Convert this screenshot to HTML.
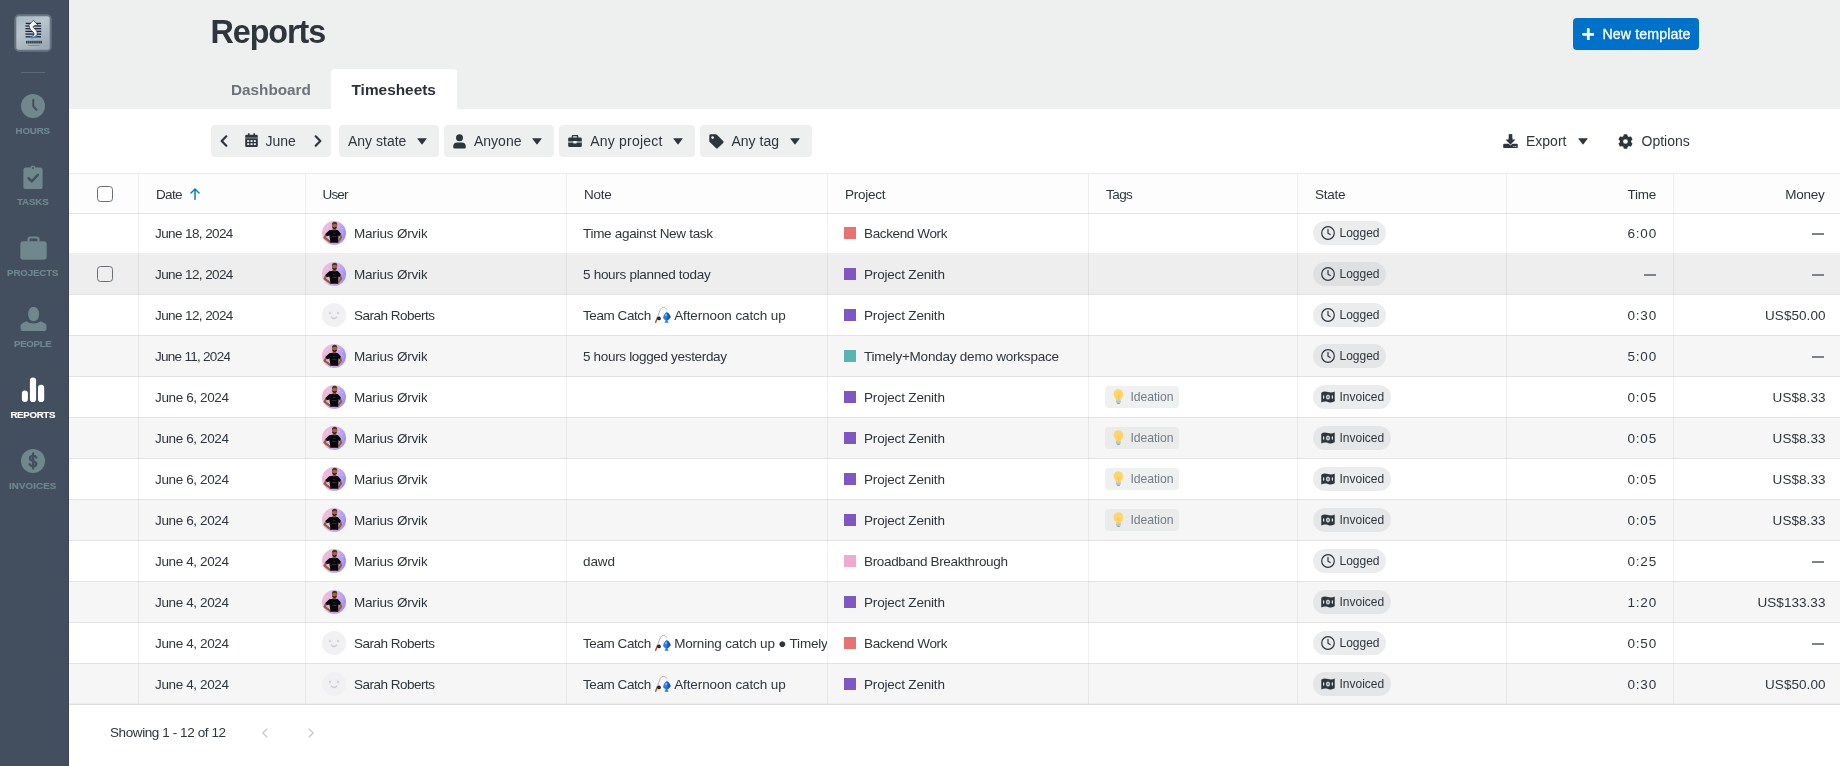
<!DOCTYPE html>
<html><head><meta charset="utf-8"><title>Reports</title>
<style>
*{box-sizing:border-box}
html,body{margin:0;padding:0}
body{width:1840px;height:766px;overflow:hidden;position:relative;background:#fff;
 font-family:"Liberation Sans",sans-serif;color:#2f353d;font-size:13px}
#root{position:absolute;left:0;top:0;width:1840px;height:766px;will-change:transform}
.abs{position:absolute}
svg{display:block;position:absolute}
/* sidebar */
#sb{position:absolute;left:0;top:0;width:69px;height:766px;background:#434f5e;box-shadow:inset -1px 0 0 #3a4654}
.lbl{position:absolute;left:0;width:65.400px;text-align:center;font-weight:bold;font-size:9.700px;line-height:10px;color:#6f878d;letter-spacing:-0.100px;padding-left:0.100px;-webkit-text-stroke:0.150px currentColor}
.lbl.on{color:#fff}
/* header */
#hd{position:absolute;left:69px;top:0;width:1771px;height:109px;background:#eef0f0}
#title{position:absolute;left:210.500px;top:13px;font-size:32.300px;letter-spacing:-1.050px;line-height:38px;font-weight:bold;color:#2f353d;white-space:nowrap}
#newbtn{position:absolute;left:1573px;top:18px;width:126px;height:32px;border-radius:4px;background:#0071c8}
#newbtn span{position:absolute;left:29.500px;top:0;line-height:32px;font-size:14.200px;letter-spacing:0.100px;color:#fff;white-space:nowrap;-webkit-text-stroke:0.300px #fff}
.tab{position:absolute;top:69px;height:40px;line-height:41px;font-weight:bold;white-space:nowrap}
#tab1{left:231px;color:#6d7379;font-size:15.3px}
#tab2{left:331px;width:126px;background:#fff;border-radius:4px 4px 0 0;color:#2b3038;font-size:15.4px;padding-left:20.5px}
/* filters */
.fb{position:absolute;top:125px;height:32px;border-radius:4px;background:#eef0f0}
.ft{position:absolute;top:125px;height:32px;line-height:32px;font-size:14px;color:#2f353d;white-space:nowrap}
/* table */
.hl{position:absolute;left:69px;width:1771px;height:1px;background:rgba(0,0,0,0.105)}
.vl{position:absolute;top:174px;width:1px;height:530px;background:rgba(0,0,0,0.06)}
.rowbg{position:absolute;left:69px;width:1771px;height:40px}
.th{position:absolute;top:175px;height:39px;line-height:40px;font-size:13.500px;letter-spacing:-0.250px;color:#2f353d;white-space:nowrap}
.td{position:absolute;height:40px;line-height:40px;font-size:13.500px;letter-spacing:-0.250px;color:#2f353d;white-space:nowrap;overflow:hidden}
.r{text-align:right}
.cb{position:absolute;width:16px;height:16px;border:1.400px solid #696e74;border-radius:3.500px}
.sq{position:absolute;width:12px;height:12px}
.badge{position:absolute;height:24px;border-radius:12px;background:rgba(195,198,203,0.33)}
.badge span{position:absolute;left:26.500px;top:0;line-height:24px;font-size:12px;color:#2f353d}
.tag{position:absolute;width:74px;height:22px;border-radius:4px;background:rgba(216,221,221,0.420)}
.tag span{position:absolute;left:25.500px;top:0;line-height:22px;font-size:12.200px;letter-spacing:-0.050px;color:#727c87}
.dash{color:#7b8288}

.cd{letter-spacing:-0.500px}
.cu{letter-spacing:-0.420px}
.cn{letter-spacing:-0.320px}
.cp{letter-spacing:-0.280px}
.ct{letter-spacing:0.800px}
.cm{letter-spacing:0.050px}
</style></head>
<body>
<div id="root">
<div id="sb">
<svg style="left:14px;top:14px" width="38" height="38" viewBox="0 0 38 38">
<defs><linearGradient id="lg" x1="0" y1="0" x2="0.600" y2="1"><stop offset="0" stop-color="#a7b6c2"/><stop offset="0.450" stop-color="#b9c5ce"/><stop offset="1" stop-color="#9dabb8"/></linearGradient></defs>
<rect x="1.300" y="1.300" width="35.400" height="35.400" rx="3.600" fill="url(#lg)" stroke="#69747f" stroke-width="2"/>
<g stroke="#1a2536" stroke-width="1.300">
<line x1="11.600" y1="9.400" x2="27" y2="9.400"/><line x1="11.400" y1="12" x2="27.200" y2="12"/><line x1="11.400" y1="14.700" x2="27.200" y2="14.700"/><line x1="11.400" y1="17.400" x2="27.200" y2="17.400"/><line x1="11.400" y1="20.100" x2="27.200" y2="20.100"/><line x1="11.600" y1="22.800" x2="27" y2="22.800"/>
</g>
<path d="M19.400 6.400 L24.200 11.200 L21.200 11.400 C18.800 11.800 18.600 13.400 20.600 14.800 C23.400 16.800 24 19.600 22.400 21.800 C21 23.600 17.600 24 15.600 22.600 C18.600 22.800 20.400 21.400 20 19.400 C19.600 17.400 15.800 16.600 15.600 13.600 C15.500 11.600 14.800 11.200 14.600 11.200Z" fill="#f6f9fb" stroke="#1a2536" stroke-width="0.700" stroke-linejoin="round"/>
<path d="M15.600 22.800 C17.800 24.400 21.400 23.800 22.800 21.200" stroke="#2a90dd" stroke-width="1.500" fill="none"/>
<g opacity="0.850"><rect x="12.00" y="26.700" width="1.550" height="2.900" rx="0.400" fill="#18212e"/><rect x="14.05" y="26.700" width="1.550" height="2.900" rx="0.400" fill="#18212e"/><rect x="16.10" y="26.700" width="1.550" height="2.900" rx="0.400" fill="#18212e"/><rect x="18.15" y="26.700" width="1.550" height="2.900" rx="0.400" fill="#18212e"/><rect x="20.20" y="26.700" width="1.550" height="2.900" rx="0.400" fill="#18212e"/><rect x="22.25" y="26.700" width="1.550" height="2.900" rx="0.400" fill="#18212e"/><rect x="24.30" y="26.700" width="1.550" height="2.900" rx="0.400" fill="#18212e"/><rect x="26.35" y="26.700" width="1.550" height="2.900" rx="0.400" fill="#18212e"/></g>
<rect x="14" y="31.300" width="11.500" height="0.500" fill="#5a6571"/>
</svg>
<div class="abs" style="left:21px;top:72px;width:24px;height:1px;background:#5d6977"></div>
<svg style="left:21px;top:94px" width="24" height="24" viewBox="0 0 24 24"><circle cx="12" cy="12" r="12" fill="#6f878d"/><path d="M12.300 5.800 V12.400 L15.600 15.800" fill="none" stroke="#434f5e" stroke-width="2" stroke-linecap="round" stroke-linejoin="round"/></svg>
<div class="lbl" style="top:126px">HOURS</div>
<svg style="left:23px;top:165px" width="20" height="24" viewBox="0 0 20 24"><path d="M7.300 2.600 A2.800 2.800 0 0 1 12.700 2.600 H17 A2.600 2.600 0 0 1 19.600 5.200 V21.400 A2.600 2.600 0 0 1 17 24 H3 A2.600 2.600 0 0 1 0.400 21.400 V5.200 A2.600 2.600 0 0 1 3 2.600 Z" fill="#6f878d"/><circle cx="10" cy="3" r="1" fill="#434f5e"/><path d="M5.600 13.200 L8.800 16.400 L14.800 10" fill="none" stroke="#434f5e" stroke-width="2.400" stroke-linecap="round" stroke-linejoin="round"/></svg>
<div class="lbl" style="top:197px">TASKS</div>
<svg style="left:19.500px;top:236px" width="27" height="24" viewBox="0 0 27 24"><path d="M8.500 5.500 V3.500 A2 2 0 0 1 10.500 1.500 H16.500 A2 2 0 0 1 18.500 3.500 V5.500" fill="none" stroke="#6f878d" stroke-width="2.200"/><rect x="0.300" y="5.300" width="26.400" height="18.500" rx="3" fill="#6f878d"/></svg>
<div class="lbl" style="top:268px">PROJECTS</div>
<svg style="left:19.500px;top:307px" width="27" height="25" viewBox="0 0 27 25"><rect x="8.200" y="-0.100" width="10.800" height="14.400" rx="5.400" ry="6.200" fill="#6f878d"/><path d="M6.300 14.200 A14 14 0 0 0 20.800 14.200 L25 16.600 Q26.500 17.500 26.500 19.200 V22 A2 2 0 0 1 24.500 24 H2.600 A2 2 0 0 1 0.600 22 V19.200 Q0.600 17.500 2.100 16.600Z" fill="#6f878d"/></svg>
<div class="lbl" style="top:339px;letter-spacing:-0.300px">PEOPLE</div>
<svg style="left:21px;top:377px" width="24" height="26" viewBox="0 0 24 26"><rect x="0.900" y="13.600" width="6" height="11.400" rx="3" fill="#fff"/><rect x="8.900" y="0.600" width="6.200" height="24.400" rx="3.100" fill="#fff"/><rect x="17" y="7.800" width="6.200" height="17.200" rx="3.100" fill="#fff"/></svg>
<div class="lbl on" style="top:410px;letter-spacing:-0.300px">REPORTS</div>
<svg style="left:21px;top:449px" width="24" height="24" viewBox="0 0 24 24"><circle cx="12" cy="12" r="12" fill="#6f878d"/><path d="M15.300 8.600 C14.800 7.400 13.600 6.900 12.200 6.900 C10.400 6.900 9 7.800 9 9.400 C9 11 10.300 11.500 12.100 12 C14 12.500 15.300 13.100 15.300 14.700 C15.300 16.300 13.900 17.200 12.100 17.200 C10.500 17.200 9.200 16.500 8.700 15.200 M12.100 4.500 V19.600" fill="none" stroke="#434f5e" stroke-width="2.300" stroke-linecap="round"/></svg>
<div class="lbl" style="top:481px;letter-spacing:0.150px">INVOICES</div>
</div>
<div id="hd"></div>
<div id="title">Reports</div>
<div id="newbtn"><svg style="left:8.800px;top:9.800px" width="12.600" height="12.600" viewBox="0 0 12.600 12.600"><path d="M6.300 1.400 V11.200 M1.400 6.300 H11.200" stroke="#fff" stroke-width="2.800" stroke-linecap="round"/></svg><span>New template</span></div>
<div class="tab" id="tab1">Dashboard</div>
<div class="tab" id="tab2">Timesheets</div>
<div class="fb" style="left:211px;width:120px"></div>
<svg style="left:220px;top:135px" width="8" height="12" viewBox="0 0 8 12"><path d="M6.300 1.300 L1.700 6 L6.300 10.700" fill="none" stroke="#2f353d" stroke-width="2.200" stroke-linecap="round" stroke-linejoin="round"/></svg>
<svg style="left:314px;top:135px" width="8" height="12" viewBox="0 0 8 12"><path d="M1.700 1.300 L6.300 6 L1.700 10.700" fill="none" stroke="#2f353d" stroke-width="2.200" stroke-linecap="round" stroke-linejoin="round"/></svg>
<svg style="left:245px;top:133.200px" width="13" height="14.600" viewBox="0 0 13 15" preserveAspectRatio="none"><path d="M3 0.300 H4.600 V1.800 H8.400 V0.300 H10 V1.800 H11.400 A1.400 1.400 0 0 1 12.800 3.200 V4.800 H0.200 V3.200 A1.400 1.400 0 0 1 1.600 1.800 H3Z M0.200 5.500 H12.800 V13 A1.400 1.400 0 0 1 11.400 14.400 H1.600 A1.400 1.400 0 0 1 0.200 13Z" fill="#2f353d"/>
<g fill="#eef0f0"><rect x="2.200" y="7.300" width="2" height="1.900"/><rect x="5.500" y="7.300" width="2" height="1.900"/><rect x="8.800" y="7.300" width="2" height="1.900"/><rect x="2.200" y="10.500" width="2" height="1.900"/><rect x="5.500" y="10.500" width="2" height="1.900"/><rect x="8.800" y="10.500" width="2" height="1.900"/></g></svg>
<div class="ft" style="left:265.500px">June</div>
<div class="fb" style="left:339px;width:100px"></div>
<div class="ft" style="left:348px">Any state</div>
<svg style="left:417px;top:138px" width="10" height="7" viewBox="0 0 10 7"><path d="M0.600 0.300 H9.400 Q10 0.300 9.600 0.800 L5.400 6.200 Q5 6.700 4.600 6.200 L0.400 0.800 Q0 0.300 0.600 0.300Z" fill="#2f353d"/></svg>
<div class="fb" style="left:444px;width:110px"></div>
<svg style="left:453px;top:133.500px" width="13" height="15" viewBox="0 0 13 15"><circle cx="6.500" cy="3.700" r="3.500" fill="#2f353d"/><path d="M4.300 8.400 H8.700 A4.100 4.100 0 0 1 12.800 12.500 V13.200 A1.300 1.300 0 0 1 11.500 14.500 H1.500 A1.300 1.300 0 0 1 0.200 13.200 V12.500 A4.100 4.100 0 0 1 4.300 8.400Z" fill="#2f353d"/></svg>
<div class="ft" style="left:474px">Anyone</div>
<svg style="left:532px;top:138px" width="10" height="7" viewBox="0 0 10 7"><path d="M0.600 0.300 H9.400 Q10 0.300 9.600 0.800 L5.400 6.200 Q5 6.700 4.600 6.200 L0.400 0.800 Q0 0.300 0.600 0.300Z" fill="#2f353d"/></svg>
<div class="fb" style="left:559px;width:136px"></div>
<svg style="left:568.200px;top:134.600px" width="14" height="12.200" viewBox="0 0 15 13" preserveAspectRatio="none"><path d="M4.700 2.800 V1.600 A1.100 1.100 0 0 1 5.800 0.500 H9.200 A1.100 1.100 0 0 1 10.300 1.600 V2.800" fill="none" stroke="#2f353d" stroke-width="1.500"/><path d="M1.600 2.700 H13.400 A1.400 1.400 0 0 1 14.800 4.100 V7 H9.300 V6.300 H5.700 V7 H0.200 V4.100 A1.400 1.400 0 0 1 1.600 2.700Z M0.200 7.900 H5.700 V8.600 A0.500 0.500 0 0 0 6.200 9.100 H8.800 A0.500 0.500 0 0 0 9.300 8.600 V7.900 H14.800 V11.400 A1.400 1.400 0 0 1 13.400 12.800 H1.600 A1.400 1.400 0 0 1 0.200 11.400Z" fill="#2f353d"/></svg>
<div class="ft" style="left:590.300px;letter-spacing:0.200px">Any project</div>
<svg style="left:673px;top:138px" width="10" height="7" viewBox="0 0 10 7"><path d="M0.600 0.300 H9.400 Q10 0.300 9.600 0.800 L5.400 6.200 Q5 6.700 4.600 6.200 L0.400 0.800 Q0 0.300 0.600 0.300Z" fill="#2f353d"/></svg>
<div class="fb" style="left:700px;width:112px"></div>
<svg style="left:709px;top:133.500px" width="15" height="15" viewBox="0 0 15 15"><path d="M0.300 1.700 A1.400 1.400 0 0 1 1.700 0.300 H6.900 A1.400 1.400 0 0 1 7.900 0.700 L14.100 6.900 A1.400 1.400 0 0 1 14.100 8.900 L8.900 14.100 A1.400 1.400 0 0 1 6.900 14.100 L0.700 7.900 A1.400 1.400 0 0 1 0.300 6.900Z" fill="#2f353d"/><circle cx="3.600" cy="3.600" r="1.300" fill="#eef0f0"/></svg>
<div class="ft" style="left:731.500px">Any tag</div>
<svg style="left:790px;top:138px" width="10" height="7" viewBox="0 0 10 7"><path d="M0.600 0.300 H9.400 Q10 0.300 9.600 0.800 L5.400 6.200 Q5 6.700 4.600 6.200 L0.400 0.800 Q0 0.300 0.600 0.300Z" fill="#2f353d"/></svg>
<svg style="left:1503px;top:133.500px" width="15" height="14.400" viewBox="0 0 15 14.4"><path d="M1.300 9.700 H13.700 A1.100 1.100 0 0 1 14.800 10.800 V13.100 A1.100 1.100 0 0 1 13.700 14.200 H1.300 A1.100 1.100 0 0 1 0.200 13.100 V10.800 A1.100 1.100 0 0 1 1.300 9.700Z" fill="#2f353d"/><path d="M5.900 0.200 H9.100 V5.700 H12 L7.500 10.500 L3 5.700 H5.900Z" fill="#2f353d" stroke="#fff" stroke-width="1.500" stroke-linejoin="round"/><path d="M5.900 0.200 H9.100 V5.700 H12 L7.500 10.500 L3 5.700 H5.900Z" fill="#2f353d" stroke="#2f353d" stroke-width="0.400" stroke-linejoin="round"/><rect x="4" y="0" width="7" height="4" fill="#fff"/><path d="M5.900 0.200 H9.100 V5.700 H5.900Z" fill="#2f353d" stroke="#2f353d" stroke-width="0.400" stroke-linejoin="round"/><circle cx="10.900" cy="12.500" r="0.600" fill="#fff"/><circle cx="12.800" cy="12.500" r="0.600" fill="#fff"/></svg>
<div class="ft" style="left:1526px">Export</div>
<svg style="left:1578px;top:138px" width="10" height="7" viewBox="0 0 10 7"><path d="M0.600 0.300 H9.400 Q10 0.300 9.600 0.800 L5.400 6.200 Q5 6.700 4.600 6.200 L0.400 0.800 Q0 0.300 0.600 0.300Z" fill="#2f353d"/></svg>
<svg style="left:1618px;top:133.800px" width="15" height="15" viewBox="0 0 15 15"><path d="M6.31 0.91 L8.69 0.91 L9.08 2.65 L10.91 3.71 L12.62 3.18 L13.80 5.23 L12.49 6.44 L12.49 8.56 L13.80 9.77 L12.62 11.82 L10.91 11.29 L9.08 12.35 L8.69 14.09 L6.31 14.09 L5.92 12.35 L4.09 11.29 L2.38 11.82 L1.20 9.77 L2.51 8.56 L2.51 6.44 L1.20 5.23 L2.38 3.18 L4.09 3.71 L5.92 2.65Z" fill="#2f353d" stroke="#2f353d" stroke-width="1.300" stroke-linejoin="round"/><circle cx="7.500" cy="7.500" r="2.350" fill="#fff"/></svg>
<div class="ft" style="left:1641.500px">Options</div>
<div class="abs" style="left:69px;top:174px;width:1771px;height:39px;background:#fdfdfd"></div>
<div class="rowbg" style="top:253px;height:41px;background:#eeeeee"></div>
<div class="rowbg" style="top:336px;height:40px;background:#f6f6f6"></div>
<div class="rowbg" style="top:418px;height:40px;background:#f6f6f6"></div>
<div class="rowbg" style="top:500px;height:40px;background:#f6f6f6"></div>
<div class="rowbg" style="top:582px;height:40px;background:#f6f6f6"></div>
<div class="rowbg" style="top:664px;height:40px;background:#f6f6f6"></div>
<div class="hl" style="top:173px;background:rgba(0,0,0,0.075)"></div>
<div class="hl" style="top:213px"></div>
<div class="hl" style="top:294px"></div>
<div class="hl" style="top:335px"></div>
<div class="hl" style="top:376px"></div>
<div class="hl" style="top:417px"></div>
<div class="hl" style="top:458px"></div>
<div class="hl" style="top:499px"></div>
<div class="hl" style="top:540px"></div>
<div class="hl" style="top:581px"></div>
<div class="hl" style="top:622px"></div>
<div class="hl" style="top:663px"></div>
<div class="hl" style="top:703px;background:rgba(0,0,0,0.035)"></div>
<div class="hl" style="top:704px;background:#dcdee0"></div>
<div class="vl" style="left:138px"></div>
<div class="vl" style="left:305px"></div>
<div class="vl" style="left:566px"></div>
<div class="vl" style="left:827px"></div>
<div class="vl" style="left:1088px"></div>
<div class="vl" style="left:1297px"></div>
<div class="vl" style="left:1506px"></div>
<div class="vl" style="left:1673px"></div>
<div class="cb" style="left:97px;top:186px"></div>
<div class="th" style="left:156px;letter-spacing:-0.650px">Date</div>
<svg style="left:190px;top:188px" width="10" height="12" viewBox="0 0 10 12"><path d="M5 11.300 V1.200 M1 5 L5 1 L9 5" fill="none" stroke="#0f78d0" stroke-width="1.500" stroke-linecap="round" stroke-linejoin="round"/></svg>
<div class="th" style="left:322.500px;letter-spacing:-0.850px">User</div>
<div class="th" style="left:584px">Note</div>
<div class="th" style="left:845px">Project</div>
<div class="th" style="left:1106px;letter-spacing:-0.550px">Tags</div>
<div class="th" style="left:1315px">State</div>
<div class="th r" style="left:1507px;width:149px">Time</div>
<div class="th r" style="left:1674px;width:150.500px">Money</div>
<div class="td cd" style="left:155px;top:214px;letter-spacing:-0.6px">June 18, 2024</div>
<svg style="left:322px;top:221px" width="24" height="24" viewBox="0 0 24 24">
<defs><linearGradient id="ag0" x1="0" y1="0.300" x2="1" y2="0.650"><stop offset="0" stop-color="#f6bcd4"/><stop offset="0.450" stop-color="#dab6ec"/><stop offset="1" stop-color="#9a8df2"/></linearGradient><clipPath id="ac0"><circle cx="12" cy="12" r="12"/></clipPath></defs>
<g clip-path="url(#ac0)"><rect width="24" height="24" fill="url(#ag0)"/>
<g fill="#fff" opacity="0.550"><circle cx="5.500" cy="6" r="0.500"/><circle cx="3" cy="9" r="0.450"/><circle cx="8" cy="3.500" r="0.450"/><circle cx="17" cy="5.500" r="0.500"/><circle cx="20.300" cy="7.500" r="0.500"/><circle cx="20" cy="12" r="0.450"/><circle cx="16.500" cy="2.800" r="0.400"/></g>
<path d="M4.300 13.600 L2.500 16.700 L8.600 21.100" fill="none" stroke="#96593b" stroke-width="2.100" stroke-linecap="round" stroke-linejoin="round"/>
<path d="M18 13.500 L19.100 16.700 L15.900 21" fill="none" stroke="#96593b" stroke-width="2" stroke-linecap="round" stroke-linejoin="round"/>
<path d="M3.300 12.900 L7.300 9.300 Q9.500 8.600 11.300 8.700 L13.800 8.700 Q15.300 8.800 16 9.200 L18.800 12.500 L17.900 14.900 L16.600 14.200 L16 21.700 L8.500 21.700 L7.400 14.600 L5.100 15.300Z" fill="#09090b"/>
<rect x="10.700" y="6" width="3.400" height="3.300" fill="#83513a"/>
<ellipse cx="12.600" cy="4.500" rx="2.650" ry="3.500" fill="#9c6646"/>
<path d="M9.950 3.900 C9.900 1.500 11.100 0.700 12.700 0.700 C14.300 0.700 15.400 1.600 15.250 3.700 C14.400 2.600 11.100 2.600 9.950 3.900Z" fill="#523322"/>
<path d="M10.100 5.600 C10.500 8.600 14.600 8.800 15.150 5.500 C14.400 6.600 11.100 6.700 10.100 5.600Z" fill="#2f1c14"/>
<rect x="10" y="15" width="4.600" height="0.800" fill="#34353a"/><rect x="10.900" y="12" width="2.400" height="0.600" fill="#26403e"/>
</g></svg>
<div class="td cu" style="left:354px;top:214px;letter-spacing:-0.19px">Marius Ørvik</div>
<div class="td cn" style="left:583px;top:214px;width:244px;letter-spacing:-0.3px">Time against New task</div>
<div class="sq" style="left:844px;top:227px;background:#e57373"></div>
<div class="td cp" style="left:864px;top:214px;letter-spacing:-0.37px">Backend Work</div>
<div class="badge" style="left:1313px;top:221px;width:73px"><svg style="left:7.500px;top:5px" width="14" height="14" viewBox="0 0 14 14"><circle cx="7" cy="7" r="6.300" fill="none" stroke="#2f353d" stroke-width="1.200"/><path d="M7 3.300 V7.200 L9.200 8.500" fill="none" stroke="#2f353d" stroke-width="1.200" stroke-linecap="round" stroke-linejoin="round"/></svg><span>Logged</span></div>
<div class="td r ct" style="left:1507px;width:150px;top:214px">6:00</div>
<div class="abs" style="left:1812px;top:233.3px;width:12px;height:1.500px;background:#7b8288"></div>
<div class="cb" style="left:97px;top:266px"></div>
<div class="td cd" style="left:155px;top:255px;letter-spacing:-0.6px">June 12, 2024</div>
<svg style="left:322px;top:262px" width="24" height="24" viewBox="0 0 24 24">
<defs><linearGradient id="ag1" x1="0" y1="0.300" x2="1" y2="0.650"><stop offset="0" stop-color="#f6bcd4"/><stop offset="0.450" stop-color="#dab6ec"/><stop offset="1" stop-color="#9a8df2"/></linearGradient><clipPath id="ac1"><circle cx="12" cy="12" r="12"/></clipPath></defs>
<g clip-path="url(#ac1)"><rect width="24" height="24" fill="url(#ag1)"/>
<g fill="#fff" opacity="0.550"><circle cx="5.500" cy="6" r="0.500"/><circle cx="3" cy="9" r="0.450"/><circle cx="8" cy="3.500" r="0.450"/><circle cx="17" cy="5.500" r="0.500"/><circle cx="20.300" cy="7.500" r="0.500"/><circle cx="20" cy="12" r="0.450"/><circle cx="16.500" cy="2.800" r="0.400"/></g>
<path d="M4.300 13.600 L2.500 16.700 L8.600 21.100" fill="none" stroke="#96593b" stroke-width="2.100" stroke-linecap="round" stroke-linejoin="round"/>
<path d="M18 13.500 L19.100 16.700 L15.900 21" fill="none" stroke="#96593b" stroke-width="2" stroke-linecap="round" stroke-linejoin="round"/>
<path d="M3.300 12.900 L7.300 9.300 Q9.500 8.600 11.300 8.700 L13.800 8.700 Q15.300 8.800 16 9.200 L18.800 12.500 L17.900 14.900 L16.600 14.200 L16 21.700 L8.500 21.700 L7.400 14.600 L5.100 15.300Z" fill="#09090b"/>
<rect x="10.700" y="6" width="3.400" height="3.300" fill="#83513a"/>
<ellipse cx="12.600" cy="4.500" rx="2.650" ry="3.500" fill="#9c6646"/>
<path d="M9.950 3.900 C9.900 1.500 11.100 0.700 12.700 0.700 C14.300 0.700 15.400 1.600 15.250 3.700 C14.400 2.600 11.100 2.600 9.950 3.900Z" fill="#523322"/>
<path d="M10.100 5.600 C10.500 8.600 14.600 8.800 15.150 5.500 C14.400 6.600 11.100 6.700 10.100 5.600Z" fill="#2f1c14"/>
<rect x="10" y="15" width="4.600" height="0.800" fill="#34353a"/><rect x="10.900" y="12" width="2.400" height="0.600" fill="#26403e"/>
</g></svg>
<div class="td cu" style="left:354px;top:255px;letter-spacing:-0.19px">Marius Ørvik</div>
<div class="td cn" style="left:583px;top:255px;width:244px;letter-spacing:-0.295px">5 hours planned today</div>
<div class="sq" style="left:844px;top:268px;background:#7e57c2"></div>
<div class="td cp" style="left:864px;top:255px;letter-spacing:-0.18px">Project Zenith</div>
<div class="badge" style="left:1313px;top:262px;width:73px"><svg style="left:7.500px;top:5px" width="14" height="14" viewBox="0 0 14 14"><circle cx="7" cy="7" r="6.300" fill="none" stroke="#2f353d" stroke-width="1.200"/><path d="M7 3.300 V7.200 L9.200 8.500" fill="none" stroke="#2f353d" stroke-width="1.200" stroke-linecap="round" stroke-linejoin="round"/></svg><span>Logged</span></div>
<div class="abs" style="left:1644px;top:274.3px;width:12px;height:1.500px;background:#7b8288"></div>
<div class="abs" style="left:1812px;top:274.3px;width:12px;height:1.500px;background:#7b8288"></div>
<div class="td cd" style="left:155px;top:296px;letter-spacing:-0.6px">June 12, 2024</div>
<svg style="left:322px;top:303px" width="24" height="24" viewBox="0 0 24 24"><circle cx="12" cy="12" r="12" fill="#f1f1f3"/><circle cx="8" cy="10" r="1.200" fill="#d2d2d5"/><circle cx="16" cy="10" r="1.200" fill="#d2d2d5"/><path d="M9.500 14.200 Q12 16.900 14.500 14.200" fill="none" stroke="#d0d0d3" stroke-width="1.600" stroke-linecap="round"/></svg>
<div class="td cu" style="left:354px;top:296px;letter-spacing:-0.5px">Sarah Roberts</div>
<div class="td cn" style="left:583px;top:296px;letter-spacing:-0.43px">Team Catch</div>
<svg style="left:655px;top:307px" width="16" height="16" viewBox="0 0 16 16"><path d="M2.100 11 L5.400 2.300 Q6.600 0.300 8.500 0.300 Q10.600 0.400 11.500 2.200" fill="none" stroke="#aaa297" stroke-width="0.800" stroke-linecap="round"/><path d="M11.500 2.200 V5.400" stroke="#d9dadc" stroke-width="0.400"/><path d="M0.700 15.300 L2.300 10.900" stroke="#a4532f" stroke-width="1.400" stroke-linecap="round"/><circle cx="4" cy="11.400" r="1.850" fill="#1d1e22"/><circle cx="4.100" cy="11.500" r="0.600" fill="#3d5a78"/><path d="M11.500 5.300 C13.800 6 15.700 8.800 15.600 10.300 C14.600 11.600 13.100 13 12.300 13.600 L13.700 15.800 L9.600 15.800 L10.700 13.600 C9.500 12.600 8.600 11.600 8.100 10.900 C8.600 8.400 9.600 6 11.500 5.300Z" fill="#2a79dd"/><path d="M11.500 5.300 C13.800 6 15.700 8.800 15.600 10.300 C14.600 11.600 13.100 13 12.300 13.600 C12.600 10.500 12.400 7.500 11.500 5.300Z" fill="#1b55bf"/><ellipse cx="11" cy="8" rx="1.300" ry="1.600" fill="#56b4ee"/><path d="M8.100 10.900 L9.300 10 L9.300 11.600Z" fill="#5f6df0"/></svg>
<div class="td cn" style="left:674.200px;width:152.800px;top:296px;letter-spacing:-0.11px">Afternoon catch up</div>
<div class="sq" style="left:844px;top:309px;background:#7e57c2"></div>
<div class="td cp" style="left:864px;top:296px;letter-spacing:-0.18px">Project Zenith</div>
<div class="badge" style="left:1313px;top:303px;width:73px"><svg style="left:7.500px;top:5px" width="14" height="14" viewBox="0 0 14 14"><circle cx="7" cy="7" r="6.300" fill="none" stroke="#2f353d" stroke-width="1.200"/><path d="M7 3.300 V7.200 L9.200 8.500" fill="none" stroke="#2f353d" stroke-width="1.200" stroke-linecap="round" stroke-linejoin="round"/></svg><span>Logged</span></div>
<div class="td r ct" style="left:1507px;width:150px;top:296px">0:30</div>
<div class="td r cm" style="left:1674px;width:151.500px;top:296px">US$50.00</div>
<div class="td cd" style="left:155px;top:337px;letter-spacing:-0.72px">June 11, 2024</div>
<svg style="left:322px;top:344px" width="24" height="24" viewBox="0 0 24 24">
<defs><linearGradient id="ag3" x1="0" y1="0.300" x2="1" y2="0.650"><stop offset="0" stop-color="#f6bcd4"/><stop offset="0.450" stop-color="#dab6ec"/><stop offset="1" stop-color="#9a8df2"/></linearGradient><clipPath id="ac3"><circle cx="12" cy="12" r="12"/></clipPath></defs>
<g clip-path="url(#ac3)"><rect width="24" height="24" fill="url(#ag3)"/>
<g fill="#fff" opacity="0.550"><circle cx="5.500" cy="6" r="0.500"/><circle cx="3" cy="9" r="0.450"/><circle cx="8" cy="3.500" r="0.450"/><circle cx="17" cy="5.500" r="0.500"/><circle cx="20.300" cy="7.500" r="0.500"/><circle cx="20" cy="12" r="0.450"/><circle cx="16.500" cy="2.800" r="0.400"/></g>
<path d="M4.300 13.600 L2.500 16.700 L8.600 21.100" fill="none" stroke="#96593b" stroke-width="2.100" stroke-linecap="round" stroke-linejoin="round"/>
<path d="M18 13.500 L19.100 16.700 L15.900 21" fill="none" stroke="#96593b" stroke-width="2" stroke-linecap="round" stroke-linejoin="round"/>
<path d="M3.300 12.900 L7.300 9.300 Q9.500 8.600 11.300 8.700 L13.800 8.700 Q15.300 8.800 16 9.200 L18.800 12.500 L17.900 14.900 L16.600 14.200 L16 21.700 L8.500 21.700 L7.400 14.600 L5.100 15.300Z" fill="#09090b"/>
<rect x="10.700" y="6" width="3.400" height="3.300" fill="#83513a"/>
<ellipse cx="12.600" cy="4.500" rx="2.650" ry="3.500" fill="#9c6646"/>
<path d="M9.950 3.900 C9.900 1.500 11.100 0.700 12.700 0.700 C14.300 0.700 15.400 1.600 15.250 3.700 C14.400 2.600 11.100 2.600 9.950 3.900Z" fill="#523322"/>
<path d="M10.100 5.600 C10.500 8.600 14.600 8.800 15.150 5.500 C14.400 6.600 11.100 6.700 10.100 5.600Z" fill="#2f1c14"/>
<rect x="10" y="15" width="4.600" height="0.800" fill="#34353a"/><rect x="10.900" y="12" width="2.400" height="0.600" fill="#26403e"/>
</g></svg>
<div class="td cu" style="left:354px;top:337px;letter-spacing:-0.19px">Marius Ørvik</div>
<div class="td cn" style="left:583px;top:337px;width:244px;letter-spacing:-0.33px">5 hours logged yesterday</div>
<div class="sq" style="left:844px;top:350px;background:#58b5b0"></div>
<div class="td cp" style="left:864px;top:337px;letter-spacing:-0.22px">Timely+Monday demo workspace</div>
<div class="badge" style="left:1313px;top:344px;width:73px"><svg style="left:7.500px;top:5px" width="14" height="14" viewBox="0 0 14 14"><circle cx="7" cy="7" r="6.300" fill="none" stroke="#2f353d" stroke-width="1.200"/><path d="M7 3.300 V7.200 L9.200 8.500" fill="none" stroke="#2f353d" stroke-width="1.200" stroke-linecap="round" stroke-linejoin="round"/></svg><span>Logged</span></div>
<div class="td r ct" style="left:1507px;width:150px;top:337px">5:00</div>
<div class="abs" style="left:1812px;top:356.3px;width:12px;height:1.500px;background:#7b8288"></div>
<div class="td cd" style="left:155px;top:378px;letter-spacing:-0.37px">June 6, 2024</div>
<svg style="left:322px;top:385px" width="24" height="24" viewBox="0 0 24 24">
<defs><linearGradient id="ag4" x1="0" y1="0.300" x2="1" y2="0.650"><stop offset="0" stop-color="#f6bcd4"/><stop offset="0.450" stop-color="#dab6ec"/><stop offset="1" stop-color="#9a8df2"/></linearGradient><clipPath id="ac4"><circle cx="12" cy="12" r="12"/></clipPath></defs>
<g clip-path="url(#ac4)"><rect width="24" height="24" fill="url(#ag4)"/>
<g fill="#fff" opacity="0.550"><circle cx="5.500" cy="6" r="0.500"/><circle cx="3" cy="9" r="0.450"/><circle cx="8" cy="3.500" r="0.450"/><circle cx="17" cy="5.500" r="0.500"/><circle cx="20.300" cy="7.500" r="0.500"/><circle cx="20" cy="12" r="0.450"/><circle cx="16.500" cy="2.800" r="0.400"/></g>
<path d="M4.300 13.600 L2.500 16.700 L8.600 21.100" fill="none" stroke="#96593b" stroke-width="2.100" stroke-linecap="round" stroke-linejoin="round"/>
<path d="M18 13.500 L19.100 16.700 L15.900 21" fill="none" stroke="#96593b" stroke-width="2" stroke-linecap="round" stroke-linejoin="round"/>
<path d="M3.300 12.900 L7.300 9.300 Q9.500 8.600 11.300 8.700 L13.800 8.700 Q15.300 8.800 16 9.200 L18.800 12.500 L17.900 14.900 L16.600 14.200 L16 21.700 L8.500 21.700 L7.400 14.600 L5.100 15.300Z" fill="#09090b"/>
<rect x="10.700" y="6" width="3.400" height="3.300" fill="#83513a"/>
<ellipse cx="12.600" cy="4.500" rx="2.650" ry="3.500" fill="#9c6646"/>
<path d="M9.950 3.900 C9.900 1.500 11.100 0.700 12.700 0.700 C14.300 0.700 15.400 1.600 15.250 3.700 C14.400 2.600 11.100 2.600 9.950 3.900Z" fill="#523322"/>
<path d="M10.100 5.600 C10.500 8.600 14.600 8.800 15.150 5.500 C14.400 6.600 11.100 6.700 10.100 5.600Z" fill="#2f1c14"/>
<rect x="10" y="15" width="4.600" height="0.800" fill="#34353a"/><rect x="10.900" y="12" width="2.400" height="0.600" fill="#26403e"/>
</g></svg>
<div class="td cu" style="left:354px;top:378px;letter-spacing:-0.19px">Marius Ørvik</div>
<div class="sq" style="left:844px;top:391px;background:#7e57c2"></div>
<div class="td cp" style="left:864px;top:378px;letter-spacing:-0.18px">Project Zenith</div>
<div class="tag" style="left:1105px;top:386px"><svg style="left:7.600px;top:3.200px" width="10.800" height="15.200" viewBox="0 0 12 16" preserveAspectRatio="none"><path d="M6 0.300 C9.200 0.300 11.400 2.600 11.400 5.400 C11.400 7.400 10.200 8.600 9.400 9.800 C9 10.400 8.800 11 8.800 11.800 H3.200 C3.200 11 3 10.400 2.600 9.800 C1.800 8.600 0.600 7.400 0.600 5.400 C0.600 2.600 2.800 0.300 6 0.300Z" fill="#ffd56b"/><path d="M4.600 6 L6 8 L7.400 6 M6 8 V11.500" fill="none" stroke="#f3c150" stroke-width="0.700"/><rect x="3.300" y="11.800" width="5.400" height="2.600" rx="0.500" fill="#b8c4cc"/><rect x="4.200" y="14.400" width="3.600" height="1.300" rx="0.600" fill="#98a6b0"/></svg><span>Ideation</span></div>
<div class="badge" style="left:1313px;top:385px;width:78px"><svg style="left:7.700px;top:6px" width="14" height="12" viewBox="0 0 15 12" preserveAspectRatio="none"><path d="M0.300 1.700 C2.500 0.300 4.800 0.300 7.500 1.100 C10.200 1.900 12.500 1.700 14.700 0.500 V10.300 C12.500 11.700 10.200 11.700 7.500 10.900 C4.800 10.100 2.500 10.300 0.300 11.500Z" fill="#2f353d"/><ellipse cx="7.500" cy="6" rx="2.100" ry="2.500" fill="#e8e9ea"/><rect x="2.200" y="4.300" width="1.300" height="3.400" rx="0.600" fill="#e8e9ea"/><rect x="11.500" y="4.300" width="1.300" height="3.400" rx="0.600" fill="#e8e9ea"/><rect x="7" y="4.700" width="1" height="2.600" fill="#2f353d"/></svg><span>Invoiced</span></div>
<div class="td r ct" style="left:1507px;width:150px;top:378px">0:05</div>
<div class="td r cm" style="left:1674px;width:151.500px;top:378px">US$8.33</div>
<div class="td cd" style="left:155px;top:419px;letter-spacing:-0.37px">June 6, 2024</div>
<svg style="left:322px;top:426px" width="24" height="24" viewBox="0 0 24 24">
<defs><linearGradient id="ag5" x1="0" y1="0.300" x2="1" y2="0.650"><stop offset="0" stop-color="#f6bcd4"/><stop offset="0.450" stop-color="#dab6ec"/><stop offset="1" stop-color="#9a8df2"/></linearGradient><clipPath id="ac5"><circle cx="12" cy="12" r="12"/></clipPath></defs>
<g clip-path="url(#ac5)"><rect width="24" height="24" fill="url(#ag5)"/>
<g fill="#fff" opacity="0.550"><circle cx="5.500" cy="6" r="0.500"/><circle cx="3" cy="9" r="0.450"/><circle cx="8" cy="3.500" r="0.450"/><circle cx="17" cy="5.500" r="0.500"/><circle cx="20.300" cy="7.500" r="0.500"/><circle cx="20" cy="12" r="0.450"/><circle cx="16.500" cy="2.800" r="0.400"/></g>
<path d="M4.300 13.600 L2.500 16.700 L8.600 21.100" fill="none" stroke="#96593b" stroke-width="2.100" stroke-linecap="round" stroke-linejoin="round"/>
<path d="M18 13.500 L19.100 16.700 L15.900 21" fill="none" stroke="#96593b" stroke-width="2" stroke-linecap="round" stroke-linejoin="round"/>
<path d="M3.300 12.900 L7.300 9.300 Q9.500 8.600 11.300 8.700 L13.800 8.700 Q15.300 8.800 16 9.200 L18.800 12.500 L17.900 14.900 L16.600 14.200 L16 21.700 L8.500 21.700 L7.400 14.600 L5.100 15.300Z" fill="#09090b"/>
<rect x="10.700" y="6" width="3.400" height="3.300" fill="#83513a"/>
<ellipse cx="12.600" cy="4.500" rx="2.650" ry="3.500" fill="#9c6646"/>
<path d="M9.950 3.900 C9.900 1.500 11.100 0.700 12.700 0.700 C14.300 0.700 15.400 1.600 15.250 3.700 C14.400 2.600 11.100 2.600 9.950 3.900Z" fill="#523322"/>
<path d="M10.100 5.600 C10.500 8.600 14.600 8.800 15.150 5.500 C14.400 6.600 11.100 6.700 10.100 5.600Z" fill="#2f1c14"/>
<rect x="10" y="15" width="4.600" height="0.800" fill="#34353a"/><rect x="10.900" y="12" width="2.400" height="0.600" fill="#26403e"/>
</g></svg>
<div class="td cu" style="left:354px;top:419px;letter-spacing:-0.19px">Marius Ørvik</div>
<div class="sq" style="left:844px;top:432px;background:#7e57c2"></div>
<div class="td cp" style="left:864px;top:419px;letter-spacing:-0.18px">Project Zenith</div>
<div class="tag" style="left:1105px;top:427px"><svg style="left:7.600px;top:3.200px" width="10.800" height="15.200" viewBox="0 0 12 16" preserveAspectRatio="none"><path d="M6 0.300 C9.200 0.300 11.400 2.600 11.400 5.400 C11.400 7.400 10.200 8.600 9.400 9.800 C9 10.400 8.800 11 8.800 11.800 H3.200 C3.200 11 3 10.400 2.600 9.800 C1.800 8.600 0.600 7.400 0.600 5.400 C0.600 2.600 2.800 0.300 6 0.300Z" fill="#ffd56b"/><path d="M4.600 6 L6 8 L7.400 6 M6 8 V11.500" fill="none" stroke="#f3c150" stroke-width="0.700"/><rect x="3.300" y="11.800" width="5.400" height="2.600" rx="0.500" fill="#b8c4cc"/><rect x="4.200" y="14.400" width="3.600" height="1.300" rx="0.600" fill="#98a6b0"/></svg><span>Ideation</span></div>
<div class="badge" style="left:1313px;top:426px;width:78px"><svg style="left:7.700px;top:6px" width="14" height="12" viewBox="0 0 15 12" preserveAspectRatio="none"><path d="M0.300 1.700 C2.500 0.300 4.800 0.300 7.500 1.100 C10.200 1.900 12.500 1.700 14.700 0.500 V10.300 C12.500 11.700 10.200 11.700 7.500 10.900 C4.800 10.100 2.500 10.300 0.300 11.500Z" fill="#2f353d"/><ellipse cx="7.500" cy="6" rx="2.100" ry="2.500" fill="#e8e9ea"/><rect x="2.200" y="4.300" width="1.300" height="3.400" rx="0.600" fill="#e8e9ea"/><rect x="11.500" y="4.300" width="1.300" height="3.400" rx="0.600" fill="#e8e9ea"/><rect x="7" y="4.700" width="1" height="2.600" fill="#2f353d"/></svg><span>Invoiced</span></div>
<div class="td r ct" style="left:1507px;width:150px;top:419px">0:05</div>
<div class="td r cm" style="left:1674px;width:151.500px;top:419px">US$8.33</div>
<div class="td cd" style="left:155px;top:460px;letter-spacing:-0.37px">June 6, 2024</div>
<svg style="left:322px;top:467px" width="24" height="24" viewBox="0 0 24 24">
<defs><linearGradient id="ag6" x1="0" y1="0.300" x2="1" y2="0.650"><stop offset="0" stop-color="#f6bcd4"/><stop offset="0.450" stop-color="#dab6ec"/><stop offset="1" stop-color="#9a8df2"/></linearGradient><clipPath id="ac6"><circle cx="12" cy="12" r="12"/></clipPath></defs>
<g clip-path="url(#ac6)"><rect width="24" height="24" fill="url(#ag6)"/>
<g fill="#fff" opacity="0.550"><circle cx="5.500" cy="6" r="0.500"/><circle cx="3" cy="9" r="0.450"/><circle cx="8" cy="3.500" r="0.450"/><circle cx="17" cy="5.500" r="0.500"/><circle cx="20.300" cy="7.500" r="0.500"/><circle cx="20" cy="12" r="0.450"/><circle cx="16.500" cy="2.800" r="0.400"/></g>
<path d="M4.300 13.600 L2.500 16.700 L8.600 21.100" fill="none" stroke="#96593b" stroke-width="2.100" stroke-linecap="round" stroke-linejoin="round"/>
<path d="M18 13.500 L19.100 16.700 L15.900 21" fill="none" stroke="#96593b" stroke-width="2" stroke-linecap="round" stroke-linejoin="round"/>
<path d="M3.300 12.900 L7.300 9.300 Q9.500 8.600 11.300 8.700 L13.800 8.700 Q15.300 8.800 16 9.200 L18.800 12.500 L17.900 14.900 L16.600 14.200 L16 21.700 L8.500 21.700 L7.400 14.600 L5.100 15.300Z" fill="#09090b"/>
<rect x="10.700" y="6" width="3.400" height="3.300" fill="#83513a"/>
<ellipse cx="12.600" cy="4.500" rx="2.650" ry="3.500" fill="#9c6646"/>
<path d="M9.950 3.900 C9.900 1.500 11.100 0.700 12.700 0.700 C14.300 0.700 15.400 1.600 15.250 3.700 C14.400 2.600 11.100 2.600 9.950 3.900Z" fill="#523322"/>
<path d="M10.100 5.600 C10.500 8.600 14.600 8.800 15.150 5.500 C14.400 6.600 11.100 6.700 10.100 5.600Z" fill="#2f1c14"/>
<rect x="10" y="15" width="4.600" height="0.800" fill="#34353a"/><rect x="10.900" y="12" width="2.400" height="0.600" fill="#26403e"/>
</g></svg>
<div class="td cu" style="left:354px;top:460px;letter-spacing:-0.19px">Marius Ørvik</div>
<div class="sq" style="left:844px;top:473px;background:#7e57c2"></div>
<div class="td cp" style="left:864px;top:460px;letter-spacing:-0.18px">Project Zenith</div>
<div class="tag" style="left:1105px;top:468px"><svg style="left:7.600px;top:3.200px" width="10.800" height="15.200" viewBox="0 0 12 16" preserveAspectRatio="none"><path d="M6 0.300 C9.200 0.300 11.400 2.600 11.400 5.400 C11.400 7.400 10.200 8.600 9.400 9.800 C9 10.400 8.800 11 8.800 11.800 H3.200 C3.200 11 3 10.400 2.600 9.800 C1.800 8.600 0.600 7.400 0.600 5.400 C0.600 2.600 2.800 0.300 6 0.300Z" fill="#ffd56b"/><path d="M4.600 6 L6 8 L7.400 6 M6 8 V11.500" fill="none" stroke="#f3c150" stroke-width="0.700"/><rect x="3.300" y="11.800" width="5.400" height="2.600" rx="0.500" fill="#b8c4cc"/><rect x="4.200" y="14.400" width="3.600" height="1.300" rx="0.600" fill="#98a6b0"/></svg><span>Ideation</span></div>
<div class="badge" style="left:1313px;top:467px;width:78px"><svg style="left:7.700px;top:6px" width="14" height="12" viewBox="0 0 15 12" preserveAspectRatio="none"><path d="M0.300 1.700 C2.500 0.300 4.800 0.300 7.500 1.100 C10.200 1.900 12.500 1.700 14.700 0.500 V10.300 C12.500 11.700 10.200 11.700 7.500 10.900 C4.800 10.100 2.500 10.300 0.300 11.500Z" fill="#2f353d"/><ellipse cx="7.500" cy="6" rx="2.100" ry="2.500" fill="#e8e9ea"/><rect x="2.200" y="4.300" width="1.300" height="3.400" rx="0.600" fill="#e8e9ea"/><rect x="11.500" y="4.300" width="1.300" height="3.400" rx="0.600" fill="#e8e9ea"/><rect x="7" y="4.700" width="1" height="2.600" fill="#2f353d"/></svg><span>Invoiced</span></div>
<div class="td r ct" style="left:1507px;width:150px;top:460px">0:05</div>
<div class="td r cm" style="left:1674px;width:151.500px;top:460px">US$8.33</div>
<div class="td cd" style="left:155px;top:501px;letter-spacing:-0.37px">June 6, 2024</div>
<svg style="left:322px;top:508px" width="24" height="24" viewBox="0 0 24 24">
<defs><linearGradient id="ag7" x1="0" y1="0.300" x2="1" y2="0.650"><stop offset="0" stop-color="#f6bcd4"/><stop offset="0.450" stop-color="#dab6ec"/><stop offset="1" stop-color="#9a8df2"/></linearGradient><clipPath id="ac7"><circle cx="12" cy="12" r="12"/></clipPath></defs>
<g clip-path="url(#ac7)"><rect width="24" height="24" fill="url(#ag7)"/>
<g fill="#fff" opacity="0.550"><circle cx="5.500" cy="6" r="0.500"/><circle cx="3" cy="9" r="0.450"/><circle cx="8" cy="3.500" r="0.450"/><circle cx="17" cy="5.500" r="0.500"/><circle cx="20.300" cy="7.500" r="0.500"/><circle cx="20" cy="12" r="0.450"/><circle cx="16.500" cy="2.800" r="0.400"/></g>
<path d="M4.300 13.600 L2.500 16.700 L8.600 21.100" fill="none" stroke="#96593b" stroke-width="2.100" stroke-linecap="round" stroke-linejoin="round"/>
<path d="M18 13.500 L19.100 16.700 L15.900 21" fill="none" stroke="#96593b" stroke-width="2" stroke-linecap="round" stroke-linejoin="round"/>
<path d="M3.300 12.900 L7.300 9.300 Q9.500 8.600 11.300 8.700 L13.800 8.700 Q15.300 8.800 16 9.200 L18.800 12.500 L17.900 14.900 L16.600 14.200 L16 21.700 L8.500 21.700 L7.400 14.600 L5.100 15.300Z" fill="#09090b"/>
<rect x="10.700" y="6" width="3.400" height="3.300" fill="#83513a"/>
<ellipse cx="12.600" cy="4.500" rx="2.650" ry="3.500" fill="#9c6646"/>
<path d="M9.950 3.900 C9.900 1.500 11.100 0.700 12.700 0.700 C14.300 0.700 15.400 1.600 15.250 3.700 C14.400 2.600 11.100 2.600 9.950 3.900Z" fill="#523322"/>
<path d="M10.100 5.600 C10.500 8.600 14.600 8.800 15.150 5.500 C14.400 6.600 11.100 6.700 10.100 5.600Z" fill="#2f1c14"/>
<rect x="10" y="15" width="4.600" height="0.800" fill="#34353a"/><rect x="10.900" y="12" width="2.400" height="0.600" fill="#26403e"/>
</g></svg>
<div class="td cu" style="left:354px;top:501px;letter-spacing:-0.19px">Marius Ørvik</div>
<div class="sq" style="left:844px;top:514px;background:#7e57c2"></div>
<div class="td cp" style="left:864px;top:501px;letter-spacing:-0.18px">Project Zenith</div>
<div class="tag" style="left:1105px;top:509px"><svg style="left:7.600px;top:3.200px" width="10.800" height="15.200" viewBox="0 0 12 16" preserveAspectRatio="none"><path d="M6 0.300 C9.200 0.300 11.400 2.600 11.400 5.400 C11.400 7.400 10.200 8.600 9.400 9.800 C9 10.400 8.800 11 8.800 11.800 H3.200 C3.200 11 3 10.400 2.600 9.800 C1.800 8.600 0.600 7.400 0.600 5.400 C0.600 2.600 2.800 0.300 6 0.300Z" fill="#ffd56b"/><path d="M4.600 6 L6 8 L7.400 6 M6 8 V11.500" fill="none" stroke="#f3c150" stroke-width="0.700"/><rect x="3.300" y="11.800" width="5.400" height="2.600" rx="0.500" fill="#b8c4cc"/><rect x="4.200" y="14.400" width="3.600" height="1.300" rx="0.600" fill="#98a6b0"/></svg><span>Ideation</span></div>
<div class="badge" style="left:1313px;top:508px;width:78px"><svg style="left:7.700px;top:6px" width="14" height="12" viewBox="0 0 15 12" preserveAspectRatio="none"><path d="M0.300 1.700 C2.500 0.300 4.800 0.300 7.500 1.100 C10.200 1.900 12.500 1.700 14.700 0.500 V10.300 C12.500 11.700 10.200 11.700 7.500 10.900 C4.800 10.100 2.500 10.300 0.300 11.500Z" fill="#2f353d"/><ellipse cx="7.500" cy="6" rx="2.100" ry="2.500" fill="#e8e9ea"/><rect x="2.200" y="4.300" width="1.300" height="3.400" rx="0.600" fill="#e8e9ea"/><rect x="11.500" y="4.300" width="1.300" height="3.400" rx="0.600" fill="#e8e9ea"/><rect x="7" y="4.700" width="1" height="2.600" fill="#2f353d"/></svg><span>Invoiced</span></div>
<div class="td r ct" style="left:1507px;width:150px;top:501px">0:05</div>
<div class="td r cm" style="left:1674px;width:151.500px;top:501px">US$8.33</div>
<div class="td cd" style="left:155px;top:542px;letter-spacing:-0.37px">June 4, 2024</div>
<svg style="left:322px;top:549px" width="24" height="24" viewBox="0 0 24 24">
<defs><linearGradient id="ag8" x1="0" y1="0.300" x2="1" y2="0.650"><stop offset="0" stop-color="#f6bcd4"/><stop offset="0.450" stop-color="#dab6ec"/><stop offset="1" stop-color="#9a8df2"/></linearGradient><clipPath id="ac8"><circle cx="12" cy="12" r="12"/></clipPath></defs>
<g clip-path="url(#ac8)"><rect width="24" height="24" fill="url(#ag8)"/>
<g fill="#fff" opacity="0.550"><circle cx="5.500" cy="6" r="0.500"/><circle cx="3" cy="9" r="0.450"/><circle cx="8" cy="3.500" r="0.450"/><circle cx="17" cy="5.500" r="0.500"/><circle cx="20.300" cy="7.500" r="0.500"/><circle cx="20" cy="12" r="0.450"/><circle cx="16.500" cy="2.800" r="0.400"/></g>
<path d="M4.300 13.600 L2.500 16.700 L8.600 21.100" fill="none" stroke="#96593b" stroke-width="2.100" stroke-linecap="round" stroke-linejoin="round"/>
<path d="M18 13.500 L19.100 16.700 L15.900 21" fill="none" stroke="#96593b" stroke-width="2" stroke-linecap="round" stroke-linejoin="round"/>
<path d="M3.300 12.900 L7.300 9.300 Q9.500 8.600 11.300 8.700 L13.800 8.700 Q15.300 8.800 16 9.200 L18.800 12.500 L17.900 14.900 L16.600 14.200 L16 21.700 L8.500 21.700 L7.400 14.600 L5.100 15.300Z" fill="#09090b"/>
<rect x="10.700" y="6" width="3.400" height="3.300" fill="#83513a"/>
<ellipse cx="12.600" cy="4.500" rx="2.650" ry="3.500" fill="#9c6646"/>
<path d="M9.950 3.900 C9.900 1.500 11.100 0.700 12.700 0.700 C14.300 0.700 15.400 1.600 15.250 3.700 C14.400 2.600 11.100 2.600 9.950 3.900Z" fill="#523322"/>
<path d="M10.100 5.600 C10.500 8.600 14.600 8.800 15.150 5.500 C14.400 6.600 11.100 6.700 10.100 5.600Z" fill="#2f1c14"/>
<rect x="10" y="15" width="4.600" height="0.800" fill="#34353a"/><rect x="10.900" y="12" width="2.400" height="0.600" fill="#26403e"/>
</g></svg>
<div class="td cu" style="left:354px;top:542px;letter-spacing:-0.19px">Marius Ørvik</div>
<div class="td cn" style="left:583px;top:542px;width:244px;letter-spacing:-0.09px">dawd</div>
<div class="sq" style="left:844px;top:555px;background:#f0a9cf"></div>
<div class="td cp" style="left:864px;top:542px;letter-spacing:-0.33px">Broadband Breakthrough</div>
<div class="badge" style="left:1313px;top:549px;width:73px"><svg style="left:7.500px;top:5px" width="14" height="14" viewBox="0 0 14 14"><circle cx="7" cy="7" r="6.300" fill="none" stroke="#2f353d" stroke-width="1.200"/><path d="M7 3.300 V7.200 L9.200 8.500" fill="none" stroke="#2f353d" stroke-width="1.200" stroke-linecap="round" stroke-linejoin="round"/></svg><span>Logged</span></div>
<div class="td r ct" style="left:1507px;width:150px;top:542px">0:25</div>
<div class="abs" style="left:1812px;top:561.3px;width:12px;height:1.500px;background:#7b8288"></div>
<div class="td cd" style="left:155px;top:583px;letter-spacing:-0.37px">June 4, 2024</div>
<svg style="left:322px;top:590px" width="24" height="24" viewBox="0 0 24 24">
<defs><linearGradient id="ag9" x1="0" y1="0.300" x2="1" y2="0.650"><stop offset="0" stop-color="#f6bcd4"/><stop offset="0.450" stop-color="#dab6ec"/><stop offset="1" stop-color="#9a8df2"/></linearGradient><clipPath id="ac9"><circle cx="12" cy="12" r="12"/></clipPath></defs>
<g clip-path="url(#ac9)"><rect width="24" height="24" fill="url(#ag9)"/>
<g fill="#fff" opacity="0.550"><circle cx="5.500" cy="6" r="0.500"/><circle cx="3" cy="9" r="0.450"/><circle cx="8" cy="3.500" r="0.450"/><circle cx="17" cy="5.500" r="0.500"/><circle cx="20.300" cy="7.500" r="0.500"/><circle cx="20" cy="12" r="0.450"/><circle cx="16.500" cy="2.800" r="0.400"/></g>
<path d="M4.300 13.600 L2.500 16.700 L8.600 21.100" fill="none" stroke="#96593b" stroke-width="2.100" stroke-linecap="round" stroke-linejoin="round"/>
<path d="M18 13.500 L19.100 16.700 L15.900 21" fill="none" stroke="#96593b" stroke-width="2" stroke-linecap="round" stroke-linejoin="round"/>
<path d="M3.300 12.900 L7.300 9.300 Q9.500 8.600 11.300 8.700 L13.800 8.700 Q15.300 8.800 16 9.200 L18.800 12.500 L17.900 14.900 L16.600 14.200 L16 21.700 L8.500 21.700 L7.400 14.600 L5.100 15.300Z" fill="#09090b"/>
<rect x="10.700" y="6" width="3.400" height="3.300" fill="#83513a"/>
<ellipse cx="12.600" cy="4.500" rx="2.650" ry="3.500" fill="#9c6646"/>
<path d="M9.950 3.900 C9.900 1.500 11.100 0.700 12.700 0.700 C14.300 0.700 15.400 1.600 15.250 3.700 C14.400 2.600 11.100 2.600 9.950 3.900Z" fill="#523322"/>
<path d="M10.100 5.600 C10.500 8.600 14.600 8.800 15.150 5.500 C14.400 6.600 11.100 6.700 10.100 5.600Z" fill="#2f1c14"/>
<rect x="10" y="15" width="4.600" height="0.800" fill="#34353a"/><rect x="10.900" y="12" width="2.400" height="0.600" fill="#26403e"/>
</g></svg>
<div class="td cu" style="left:354px;top:583px;letter-spacing:-0.19px">Marius Ørvik</div>
<div class="sq" style="left:844px;top:596px;background:#7e57c2"></div>
<div class="td cp" style="left:864px;top:583px;letter-spacing:-0.18px">Project Zenith</div>
<div class="badge" style="left:1313px;top:590px;width:78px"><svg style="left:7.700px;top:6px" width="14" height="12" viewBox="0 0 15 12" preserveAspectRatio="none"><path d="M0.300 1.700 C2.500 0.300 4.800 0.300 7.500 1.100 C10.200 1.900 12.500 1.700 14.700 0.500 V10.300 C12.500 11.700 10.200 11.700 7.500 10.900 C4.800 10.100 2.500 10.300 0.300 11.500Z" fill="#2f353d"/><ellipse cx="7.500" cy="6" rx="2.100" ry="2.500" fill="#e8e9ea"/><rect x="2.200" y="4.300" width="1.300" height="3.400" rx="0.600" fill="#e8e9ea"/><rect x="11.500" y="4.300" width="1.300" height="3.400" rx="0.600" fill="#e8e9ea"/><rect x="7" y="4.700" width="1" height="2.600" fill="#2f353d"/></svg><span>Invoiced</span></div>
<div class="td r ct" style="left:1507px;width:150px;top:583px">1:20</div>
<div class="td r cm" style="left:1674px;width:151.500px;top:583px">US$133.33</div>
<div class="td cd" style="left:155px;top:624px;letter-spacing:-0.37px">June 4, 2024</div>
<svg style="left:322px;top:631px" width="24" height="24" viewBox="0 0 24 24"><circle cx="12" cy="12" r="12" fill="#f1f1f3"/><circle cx="8" cy="10" r="1.200" fill="#d2d2d5"/><circle cx="16" cy="10" r="1.200" fill="#d2d2d5"/><path d="M9.500 14.200 Q12 16.900 14.500 14.200" fill="none" stroke="#d0d0d3" stroke-width="1.600" stroke-linecap="round"/></svg>
<div class="td cu" style="left:354px;top:624px;letter-spacing:-0.5px">Sarah Roberts</div>
<div class="td cn" style="left:583px;top:624px;letter-spacing:-0.43px">Team Catch</div>
<svg style="left:655px;top:635px" width="16" height="16" viewBox="0 0 16 16"><path d="M2.100 11 L5.400 2.300 Q6.600 0.300 8.500 0.300 Q10.600 0.400 11.500 2.200" fill="none" stroke="#aaa297" stroke-width="0.800" stroke-linecap="round"/><path d="M11.500 2.200 V5.400" stroke="#d9dadc" stroke-width="0.400"/><path d="M0.700 15.300 L2.300 10.900" stroke="#a4532f" stroke-width="1.400" stroke-linecap="round"/><circle cx="4" cy="11.400" r="1.850" fill="#1d1e22"/><circle cx="4.100" cy="11.500" r="0.600" fill="#3d5a78"/><path d="M11.500 5.300 C13.800 6 15.700 8.800 15.600 10.300 C14.600 11.600 13.100 13 12.300 13.600 L13.700 15.800 L9.600 15.800 L10.700 13.600 C9.500 12.600 8.600 11.600 8.100 10.900 C8.600 8.400 9.600 6 11.500 5.300Z" fill="#2a79dd"/><path d="M11.500 5.300 C13.800 6 15.700 8.800 15.600 10.300 C14.600 11.600 13.100 13 12.300 13.600 C12.600 10.500 12.400 7.500 11.500 5.300Z" fill="#1b55bf"/><ellipse cx="11" cy="8" rx="1.300" ry="1.600" fill="#56b4ee"/><path d="M8.100 10.900 L9.300 10 L9.300 11.600Z" fill="#5f6df0"/></svg>
<div class="td cn" style="left:674.200px;width:152.800px;top:624px;letter-spacing:-0.19px">Morning catch up ● Timely</div>
<div class="sq" style="left:844px;top:637px;background:#e57373"></div>
<div class="td cp" style="left:864px;top:624px;letter-spacing:-0.37px">Backend Work</div>
<div class="badge" style="left:1313px;top:631px;width:73px"><svg style="left:7.500px;top:5px" width="14" height="14" viewBox="0 0 14 14"><circle cx="7" cy="7" r="6.300" fill="none" stroke="#2f353d" stroke-width="1.200"/><path d="M7 3.300 V7.200 L9.200 8.500" fill="none" stroke="#2f353d" stroke-width="1.200" stroke-linecap="round" stroke-linejoin="round"/></svg><span>Logged</span></div>
<div class="td r ct" style="left:1507px;width:150px;top:624px">0:50</div>
<div class="abs" style="left:1812px;top:643.3px;width:12px;height:1.500px;background:#7b8288"></div>
<div class="td cd" style="left:155px;top:665px;letter-spacing:-0.37px">June 4, 2024</div>
<svg style="left:322px;top:672px" width="24" height="24" viewBox="0 0 24 24"><circle cx="12" cy="12" r="12" fill="#f1f1f3"/><circle cx="8" cy="10" r="1.200" fill="#d2d2d5"/><circle cx="16" cy="10" r="1.200" fill="#d2d2d5"/><path d="M9.500 14.200 Q12 16.900 14.500 14.200" fill="none" stroke="#d0d0d3" stroke-width="1.600" stroke-linecap="round"/></svg>
<div class="td cu" style="left:354px;top:665px;letter-spacing:-0.5px">Sarah Roberts</div>
<div class="td cn" style="left:583px;top:665px;letter-spacing:-0.43px">Team Catch</div>
<svg style="left:655px;top:676px" width="16" height="16" viewBox="0 0 16 16"><path d="M2.100 11 L5.400 2.300 Q6.600 0.300 8.500 0.300 Q10.600 0.400 11.500 2.200" fill="none" stroke="#aaa297" stroke-width="0.800" stroke-linecap="round"/><path d="M11.500 2.200 V5.400" stroke="#d9dadc" stroke-width="0.400"/><path d="M0.700 15.300 L2.300 10.900" stroke="#a4532f" stroke-width="1.400" stroke-linecap="round"/><circle cx="4" cy="11.400" r="1.850" fill="#1d1e22"/><circle cx="4.100" cy="11.500" r="0.600" fill="#3d5a78"/><path d="M11.500 5.300 C13.800 6 15.700 8.800 15.600 10.300 C14.600 11.600 13.100 13 12.300 13.600 L13.700 15.800 L9.600 15.800 L10.700 13.600 C9.500 12.600 8.600 11.600 8.100 10.900 C8.600 8.400 9.600 6 11.500 5.300Z" fill="#2a79dd"/><path d="M11.500 5.300 C13.800 6 15.700 8.800 15.600 10.300 C14.600 11.600 13.100 13 12.300 13.600 C12.600 10.500 12.400 7.500 11.500 5.300Z" fill="#1b55bf"/><ellipse cx="11" cy="8" rx="1.300" ry="1.600" fill="#56b4ee"/><path d="M8.100 10.900 L9.300 10 L9.300 11.600Z" fill="#5f6df0"/></svg>
<div class="td cn" style="left:674.200px;width:152.800px;top:665px;letter-spacing:-0.11px">Afternoon catch up</div>
<div class="sq" style="left:844px;top:678px;background:#7e57c2"></div>
<div class="td cp" style="left:864px;top:665px;letter-spacing:-0.18px">Project Zenith</div>
<div class="badge" style="left:1313px;top:672px;width:78px"><svg style="left:7.700px;top:6px" width="14" height="12" viewBox="0 0 15 12" preserveAspectRatio="none"><path d="M0.300 1.700 C2.500 0.300 4.800 0.300 7.500 1.100 C10.200 1.900 12.500 1.700 14.700 0.500 V10.300 C12.500 11.700 10.200 11.700 7.500 10.900 C4.800 10.100 2.500 10.300 0.300 11.500Z" fill="#2f353d"/><ellipse cx="7.500" cy="6" rx="2.100" ry="2.500" fill="#e8e9ea"/><rect x="2.200" y="4.300" width="1.300" height="3.400" rx="0.600" fill="#e8e9ea"/><rect x="11.500" y="4.300" width="1.300" height="3.400" rx="0.600" fill="#e8e9ea"/><rect x="7" y="4.700" width="1" height="2.600" fill="#2f353d"/></svg><span>Invoiced</span></div>
<div class="td r ct" style="left:1507px;width:150px;top:665px">0:30</div>
<div class="td r cm" style="left:1674px;width:151.500px;top:665px">US$50.00</div>
<div class="abs" style="left:110px;top:723px;line-height:20px;font-size:13.500px;letter-spacing:-0.410px;white-space:nowrap;color:#2f353d">Showing 1 - 12 of 12</div>
<svg style="left:260.700px;top:728px" width="8" height="10" viewBox="0 0 8 10"><path d="M6 1 L1.800 5 L6 9" fill="none" stroke="#c5c8ca" stroke-width="1.200" stroke-linecap="round" stroke-linejoin="round"/></svg>
<svg style="left:306.500px;top:728px" width="8" height="10" viewBox="0 0 8 10"><path d="M2 1 L6.200 5 L2 9" fill="none" stroke="#c5c8ca" stroke-width="1.200" stroke-linecap="round" stroke-linejoin="round"/></svg>
</div>
</body></html>
